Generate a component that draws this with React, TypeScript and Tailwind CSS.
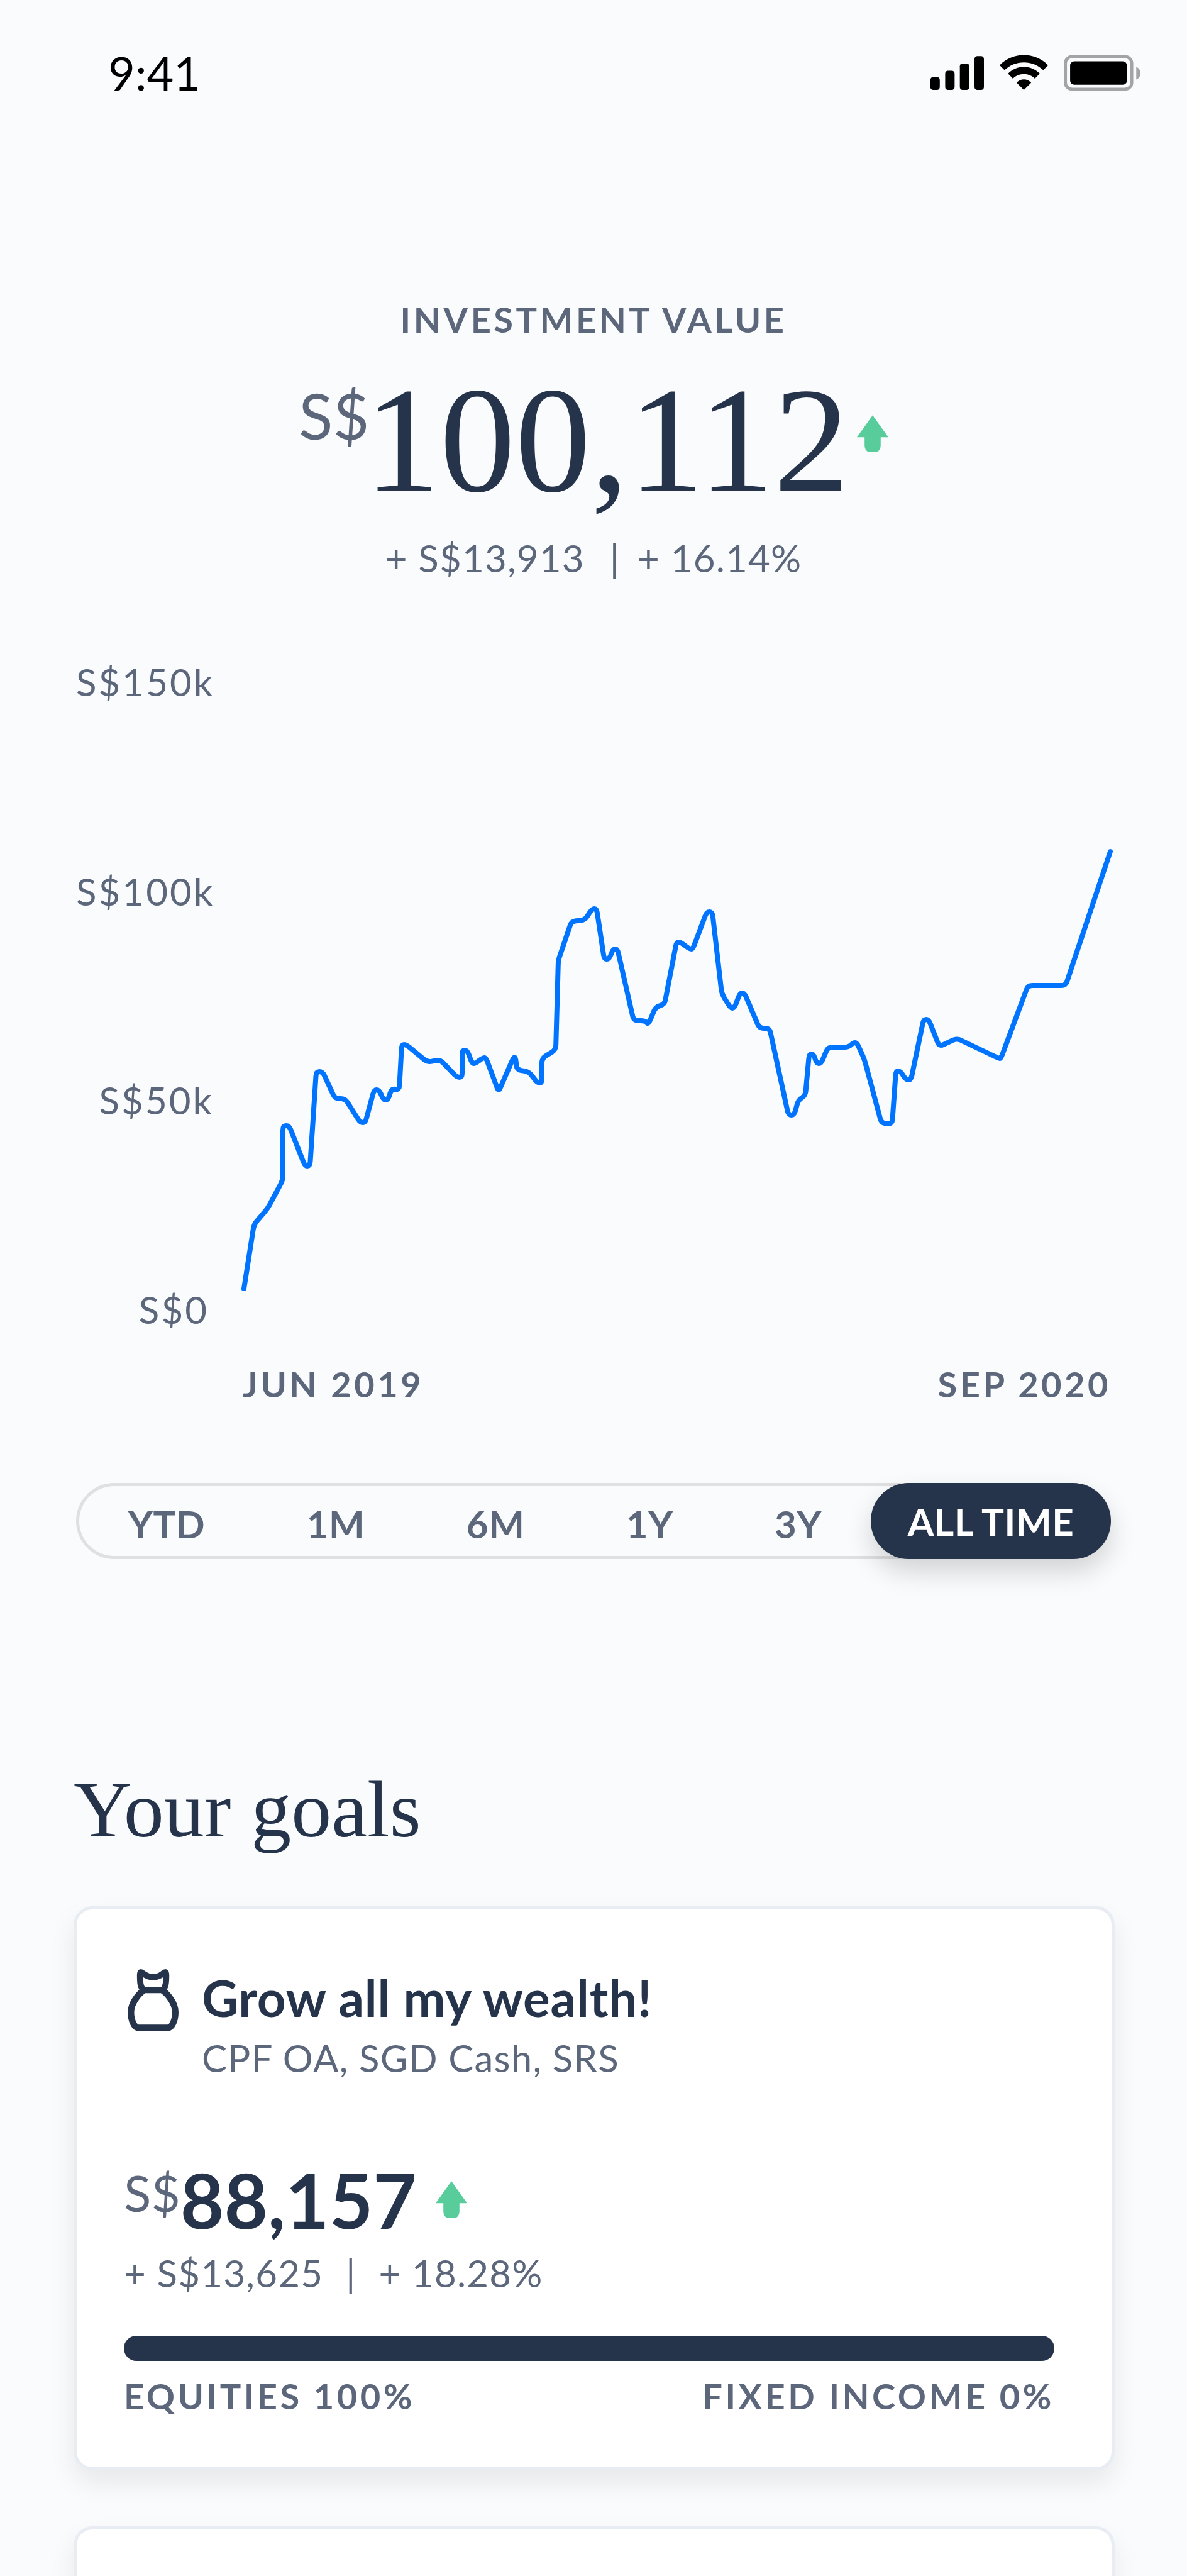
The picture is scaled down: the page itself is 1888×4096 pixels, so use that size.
import { useState } from 'react';

const periods = ['YTD', '1M', '6M', '1Y', '3Y', 'ALL TIME'];

const axisLabels = ['S$150k', 'S$100k', 'S$50k', 'S$0'];

const history: [number, number][] = [
  [3, 1001], [19, 899], [41, 873], [65, 828], [65, 742], [75, 742], [100, 806], [108, 806],
  [118, 656], [128, 656], [148, 699], [164, 699], [188, 737], [196, 737], [210, 685], [218, 685],
  [225, 701], [232, 701], [238, 683], [250, 685], [254, 613], [261, 613], [295, 641], [315, 637],
  [342, 665], [350, 665], [350, 622], [358, 622], [366, 643], [371, 643], [383, 634], [388, 634],
  [408, 688], [432, 633], [435, 633], [437, 653], [456, 656], [470, 674], [477, 674], [477, 635],
  [499, 621], [503, 479], [524, 417], [545, 415], [557, 397], [564, 397], [576, 477], [584, 477],
  [590, 461], [597, 461], [623, 575], [641, 575], [644, 579], [647, 579], [658, 553], [672, 549],
  [691, 450], [697, 450], [712, 461], [717, 461], [739, 402], [748, 402], [763, 532], [777, 555],
  [783, 555], [792, 531], [799, 531], [823, 587], [839, 587], [869, 725], [878, 725], [885, 701],
  [896, 694], [902, 628], [909, 628], [914, 643], [921, 643], [932, 617], [965, 617], [972, 610],
  [978, 610], [990, 637], [1017, 738], [1034, 739], [1040, 655], [1047, 655], [1056, 669], [1064, 669],
  [1084, 573], [1092, 573], [1109, 616], [1137, 603], [1204, 635], [1207, 635], [1250, 519], [1310, 519],
  [1381, 306],
];

// Joins the points with straight lines and softens every corner by up to `radius`.
const smoothPath = (points: [number, number][], radius: number) => {
  const towards = (from: [number, number], to: [number, number]) => {
    const length = Math.hypot(to[0] - from[0], to[1] - from[1]);
    const t = Math.min(radius, length / 2) / length;
    return `${(from[0] + (to[0] - from[0]) * t).toFixed(1)} ${(from[1] + (to[1] - from[1]) * t).toFixed(1)}`;
  };
  let d = `M${points[0].join(' ')}`;
  for (let i = 1; i < points.length - 1; i++) {
    d += ` L${towards(points[i], points[i - 1])} Q${points[i].join(' ')} ${towards(points[i], points[i + 1])}`;
  }
  return `${d} L${points[points.length - 1].join(' ')}`;
};

const StatusIcons = () => (
  <svg viewBox="141 70 1209 209" className="h-[58px] w-[336px]" aria-hidden="true">
    <rect x="143" y="198" width="54" height="74" rx="16" />
    <rect x="228" y="162" width="54" height="110" rx="16" />
    <rect x="312" y="120" width="54" height="152" rx="16" />
    <rect x="396" y="78" width="54" height="194" rx="16" />
    <path d="M540 130 C618 53 740 53 818 130 L790 158 C728 99 630 99 568 158 Z" strokeLinejoin="round" />
    <path d="M588 178 C640 126 718 126 770 178 L742 207 C706 172 652 172 616 207 Z" />
    <path d="M637 230 C661 205 697 205 721 230 L679 272 Z" />
    <rect x="917" y="81" width="380" height="187" rx="38" fill="none" stroke="#a3a4a6" strokeWidth="18" />
    <rect x="944" y="108" width="326" height="134" rx="24" />
    <path d="M1323 140 C1356 154 1356 198 1323 212 Z" fill="#a3a4a6" />
  </svg>
);

const ArrowUp = ({ className }: { className: string }) => (
  <svg viewBox="33 27 180 211" className={`h-[59px] w-[50px] shrink-0 ${className}`} aria-hidden="true">
    <path d="M123 27 L213 153 H169 V198 C169 226 153 238 137 238 H109 C93 238 77 226 77 198 V153 H33 Z" fill="#58cd9b" />
  </svg>
);

const MoneyBag = () => (
  <svg viewBox="9 42 330 360" className="mt-0.5 h-[100px] w-[92px] shrink-0" aria-hidden="true">
    <path
      d="M121 165 C103 148 101 126 101 82 C101 58 106 60 118 70 C132 80 147 92 176 92 C205 92 220 80 234 70 C246 60 251 58 251 82 C251 126 248 148 231 165 Z"
      fill="none"
      stroke="#25334b"
      strokeWidth="35"
      strokeLinejoin="round"
    />
    <path
      d="M125 165 H227 C266 193 303 244 303 292 C303 338 285 382 258 382 H94 C67 382 49 338 49 292 C49 244 86 193 125 165 Z"
      fill="none"
      stroke="#25334b"
      strokeWidth="37"
      strokeLinejoin="round"
    />
  </svg>
);

export default function App() {
  const [period, setPeriod] = useState('ALL TIME');

  return (
    <main className="min-h-screen overflow-hidden bg-[#f9fbfd] font-['Lato',sans-serif] text-[#5c677b]">
      {/* Status bar */}
      <header className="flex items-center justify-between pt-[72px] pr-[73px] pl-[172px] text-black">
        <span className="text-[74px] leading-[88px]">9:41</span>
        <StatusIcons />
      </header>

      <section className="px-[121px] pt-[312px]">
        <h1 className="text-center text-[56px] leading-[72px] font-bold tracking-[0.08em]">INVESTMENT VALUE</h1>

        <div className="mt-9 flex items-start justify-center">
          <span className="mt-[30px] text-[100px] leading-[100px]">S$</span>
          <span className="-ml-2 font-['Liberation_Serif',serif] text-[240px] leading-[240px] text-[#25334b]">100,112</span>
          <ArrowUp className="mt-20 ml-3" />
        </div>

        <p className="mt-[31px] flex justify-center text-[60px] leading-[72px] tracking-[0.02em]">
          <span>+ S$13,913</span>
          <span className="mr-7 ml-10">|</span>
          <span>+ 16.14%</span>
        </p>

        {/* Performance chart */}
        <div className="mt-[125px] flex">
          <div className="flex w-[264px] shrink-0 flex-col justify-between pr-[45px] text-right text-[60px] leading-[72px] tracking-wider">
            {axisLabels.map((label) => (
              <span key={label} className="last:pr-2">
                {label}
              </span>
            ))}
          </div>
          <svg viewBox="0 0 1382 1070" className="min-w-0 flex-1 overflow-visible" role="img" aria-label="Investment value over time">
            <path d={smoothPath(history, 7)} fill="none" stroke="#0073ff" strokeWidth="8" strokeLinecap="round" strokeLinejoin="round" />
          </svg>
        </div>

        <div className="mt-[47px] flex justify-between pl-[265px] text-[56px] leading-[72px] font-bold tracking-[0.08em]">
          <span>JUN 2019</span>
          <span>SEP 2020</span>
        </div>

        <div className="mt-[121px] flex rounded-full text-[60px] leading-[72px] font-bold tracking-[0.01em] shadow-[inset_0_0_0_5px_#e0e0e0]">
          <div className="flex flex-1 items-center justify-between pt-2 pr-[78px] pl-[83px]">
            {periods.slice(0, 5).map((p) => (
              <button key={p} type="button" aria-pressed={period === p} onClick={() => setPeriod(p)}>
                {p}
              </button>
            ))}
          </div>
          <button
            type="button"
            aria-pressed={period === 'ALL TIME'}
            onClick={() => setPeriod('ALL TIME')}
            className="h-[121px] w-[382px] rounded-full bg-[#25334b] text-white shadow-[0_20px_40px_rgba(0,0,0,0.16)]"
          >
            ALL TIME
          </button>
        </div>
      </section>

      <section className="pt-[326px] pr-[115px] pl-[117px]">
        <h2 className="font-['Liberation_Serif',serif] text-[128px] leading-[144px] text-[#25334b]">Your goals</h2>

        <article className="mt-[82px] rounded-[30px] border-[5px] border-[#e8ecf3] bg-white pt-[92px] pr-[91px] pb-[77px] pl-[75px] shadow-[0_20px_40px_rgba(0,0,0,0.08)]">
          <div className="flex items-start gap-8">
            <MoneyBag />
            <div>
              <h3 className="text-[80px] leading-[96px] font-bold tracking-[0.01em] text-[#25334b]">Grow all my wealth!</h3>
              <p className="mt-3 text-[60px] leading-[72px] tracking-[0.02em]">CPF OA, SGD Cash, SRS</p>
            </div>
          </div>

          <div className="mt-[130px] flex items-start">
            <span className="mt-2 text-[80px] leading-[80px]">S$</span>
            <span className="text-[120px] leading-[120px] font-bold text-[#25334b]">88,157</span>
            <ArrowUp className="mt-[30px] ml-[30px]" />
          </div>

          <p className="mt-5 flex text-[60px] leading-[72px] tracking-[0.02em]">
            <span>+ S$13,625</span>
            <span className="mx-9">|</span>
            <span>+ 18.28%</span>
          </p>

          <div className="mt-16 h-10 rounded-full bg-[#25334b]" />
          <div className="mt-5 flex justify-between text-[56px] leading-[72px] font-bold tracking-[0.08em]">
            <span>EQUITIES 100%</span>
            <span>FIXED INCOME 0%</span>
          </div>
        </article>

        <article className="mt-[89px] h-20 rounded-t-[30px] border-[5px] border-b-0 border-[#e8ecf3] bg-white shadow-[0_20px_40px_rgba(0,0,0,0.08)]" />
      </section>
    </main>
  );
}
